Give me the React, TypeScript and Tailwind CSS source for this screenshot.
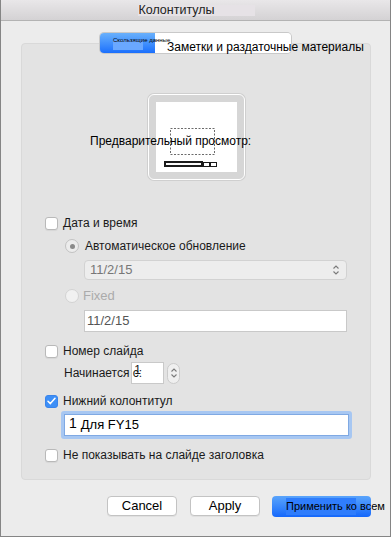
import React from 'react';

const Checkbox = ({ checked = false }: { checked?: boolean }) =>
  checked ? (
    <span className="flex h-[13px] w-[13px] shrink-0 items-center justify-center rounded-[3px] border border-[#3a84ea] bg-[#3d8ff7]">
      <svg width="9" height="8" viewBox="0 0 9 8" fill="none">
        <path d="M1 4.2 L3.4 6.6 L8 1.2" stroke="white" strokeWidth="1.5" strokeLinecap="round" strokeLinejoin="round" />
      </svg>
    </span>
  ) : (
    <span className="h-[13px] w-[13px] shrink-0 rounded-[3px] border border-[#b9b9b9] bg-white shadow-[0_1px_1px_rgba(0,0,0,0.06)]" />
  );

const UpDown = ({ className = '' }: { className?: string }) => (
  <svg width="8" height="12" viewBox="0 0 8 12" fill="none" className={className}>
    <path d="M1.5 4.5 L4 2 L6.5 4.5" stroke="#7a7a7a" strokeWidth="1.1" />
    <path d="M1.5 7.5 L4 10 L6.5 7.5" stroke="#7a7a7a" strokeWidth="1.1" />
  </svg>
);

export default function App() {
  return (
    <div className="flex h-[537px] w-[391px] flex-col overflow-hidden border-x border-b border-[#858585] bg-[#ececec] font-['Liberation_Sans',Arial,sans-serif] text-[12px] text-[#1a1a1a]">
      {/* title bar */}
      <div className="flex h-[21px] shrink-0 items-center justify-center border-b border-[#b3b3b3] bg-gradient-to-b from-[#e9e7e9] to-[#d4d2d4]">
        <span className="ml-[2px] bg-[#e6e2e6] pr-[40px] text-[12.5px] leading-[11px] text-[#222]">Колонтитулы</span>
      </div>

      {/* tabs */}
      <div className="relative z-10 mt-[12px] flex justify-center">
        <div className="flex h-[20px] w-[191px] rounded-[4px] shadow-[0_0_0_1px_#c9c9c9]">
          <div className="relative w-[55px] shrink-0 rounded-l-[4px] bg-gradient-to-b from-[#69b0fb] to-[#1a6ffd]">
            <span className="absolute left-[13px] top-[7px] h-[10px] w-[30px] bg-[#6aa8ff]" />
            <span className="absolute left-[13px] top-[3px] whitespace-nowrap text-[6px] leading-[8px] text-black">Скользящие данные</span>
          </div>
          <div className="min-w-0 flex-1 rounded-r-[4px] bg-white pl-[12px] pt-[5px]">
            <span className="whitespace-nowrap text-[12px] leading-[16px] text-black">Заметки и раздаточные материалы</span>
          </div>
        </div>
      </div>

      {/* panel */}
      <div className="relative z-0 ml-[20px] mt-[-10px] h-[437px] w-[350px] shrink-0 rounded-[4px] border border-[#d9d9d9] bg-[#e3e3e3] pt-[50px]">
        <div className="flex justify-center pl-[1px]">
          <div className="relative h-[86px] w-[97px] rounded-[6px] border border-white bg-[#d6d6d6] p-[7px] shadow-[0_0_0_1px_#cfcfcf]">
            <div className="h-full w-full bg-white">
              <svg width="81" height="70" viewBox="0 0 81 70" fill="none">
                <rect x="14.5" y="26.5" width="44" height="26" stroke="#6b6b6b" strokeDasharray="2 1.5" />
                <rect x="8" y="59" width="39" height="6" fill="#1a1a1a" />
                <rect x="10" y="61" width="35" height="2" fill="#fafafa" />
                <rect x="47.5" y="60.5" width="6" height="4" fill="white" stroke="#1a1a1a" />
                <rect x="54.5" y="60.5" width="6" height="4" fill="white" stroke="#1a1a1a" />
              </svg>
            </div>
            <span className="absolute left-[-59px] top-[38px] whitespace-nowrap text-[12px] leading-[16px] text-black">Предварительный просмотр:</span>
          </div>
        </div>

        <div className="mt-[33px] flex h-[20px] items-center gap-[5px] pl-[23px]">
          <Checkbox />
          <span>Дата и время</span>
        </div>

        <div className="mt-[3px] flex h-[20px] items-center gap-[6px] pl-[43px]">
          <span className="flex h-[14px] w-[14px] items-center justify-center rounded-full border border-[#c2c2c2] bg-[#ececec]">
            <span className="h-[5px] w-[5px] rounded-full bg-[#8a8a8a]" />
          </span>
          <span>Автоматическое обновление</span>
        </div>

        <div className="ml-[62px] mt-[4px] flex h-[20px] w-[263px] items-center justify-between rounded-[4px] border border-[#d2d2d2] bg-[#ededed] pl-[5px] pr-[6px]">
          <span className="text-[13px] text-[#777]">11/2/15</span>
          <UpDown />
        </div>

        <div className="mt-[6px] flex h-[20px] items-center gap-[4px] pl-[43px]">
          <span className="h-[14px] w-[14px] rounded-full border border-[#d3d3d3] bg-[#f1f1f1]" />
          <span className="text-[13px] text-[#ababab]">Fixed</span>
        </div>

        <div className="ml-[62px] mt-[4px] flex h-[22px] w-[263px] items-center border border-[#c9c9c9] bg-white pl-[2px]">
          <span className="text-[13px] text-[#555]">11/2/15</span>
        </div>

        <div className="mt-[9px] flex h-[20px] items-center gap-[5px] pl-[23px]">
          <Checkbox />
          <span>Номер слайда</span>
        </div>

        <div className="mt-[1px] flex h-[22px] items-center pl-[42px]">
          <span className="relative z-10 whitespace-nowrap">Начинается с:</span>
          <span className="ml-[-11px] flex h-[22px] w-[33px] items-start border border-[#c9c9c9] bg-white pl-[2px] text-[12px] leading-[14px]">1</span>
          <span className="ml-[3px] flex h-[21px] w-[13px] flex-col items-center justify-center rounded-full border border-[#cbcbcb] bg-[#efefef]">
            <UpDown />
          </span>
        </div>

        <div className="mt-[7px] flex h-[20px] items-center gap-[5px] pl-[23px]">
          <Checkbox checked />
          <span>Нижний колонтитул</span>
        </div>

        <div className="ml-[39px] flex h-[28px] w-[291px] items-center rounded-[3px] bg-[#a7c7f2] p-[3px]">
          <div className="flex h-full w-full items-center border border-[#7fa9e3] bg-white pl-[4px]">
            <span className="mb-[3px] text-[14px] text-black">1</span>
            <span className="ml-[4px] text-[13px] text-black">Для FY15</span>
          </div>
        </div>

        <div className="mt-[6px] flex h-[20px] items-center gap-[5px] pl-[23px]">
          <Checkbox />
          <span>Не показывать на слайде заголовка</span>
        </div>
      </div>

      {/* buttons */}
      <div className="mt-[16px] flex justify-end pr-[19px]">
        <button className="h-[20px] w-[70px] rounded-[4px] border border-[#c3c3c3] bg-white text-[13px] leading-[18px] text-black shadow-[0_1px_0_rgba(0,0,0,0.05)]">Cancel</button>
        <button className="ml-[13px] h-[20px] w-[70px] rounded-[4px] border border-[#c3c3c3] bg-white text-[13px] leading-[18px] text-black shadow-[0_1px_0_rgba(0,0,0,0.05)]">Apply</button>
        <button className="relative ml-[12px] h-[21px] w-[99px] overflow-visible rounded-[4px] bg-gradient-to-b from-[#5aa4fb] to-[#1467fb] text-left">
          <span className="absolute left-[14px] top-[2px] h-[17px] w-[70px] bg-[#2f7dfc]" />
          <span className="absolute left-[14px] top-[2px] whitespace-nowrap text-[11px] leading-[17px] text-black">Применить ко всем</span>
        </button>
      </div>
    </div>
  );
}
